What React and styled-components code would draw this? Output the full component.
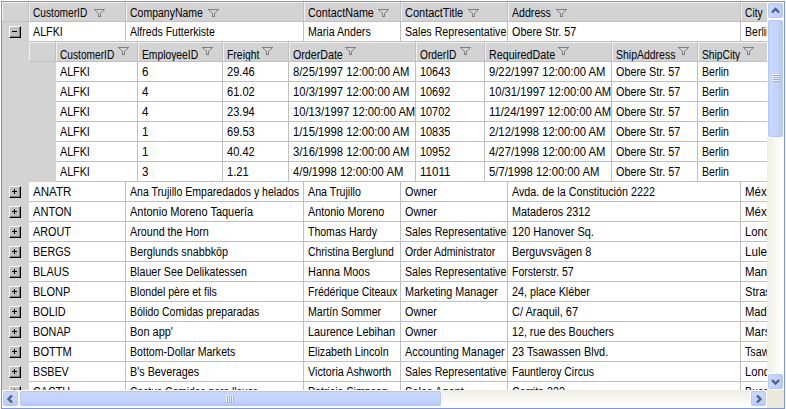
import React, { useLayoutEffect, useRef } from "react";
import styled, { createGlobalStyle } from "styled-components";

const Global = createGlobalStyle`
  html, body { margin: 0; padding: 0; background: #fff; overflow: hidden; }
  * { box-sizing: border-box; }
`;

const LINE = "#c0c0c0";
const FACE = "#d3d3d3";

const Frame = styled.div`
  width: 784px;
  height: 408px;
  margin: 1px 0 0 1px;
  border: 1px solid #7a96df;
  display: grid;
  grid-template-columns: 765px 17px;
  grid-template-rows: 388px 18px;
  font: 12.5px/21px "Liberation Sans", Arial, sans-serif;
  color: #000;
  overflow: hidden;
  background: #fff;
`;

const Viewport = styled.div`
  overflow: hidden;
  background: #fff;
`;

const OuterRow = styled.div`
  display: grid;
  grid-template-columns: 27px 97px 178px 97px 107px 233px 120px;
  height: 20px;
`;

const NestedRow = styled.div`
  display: grid;
  grid-template-columns: 82px 85px 66px 127px 69px 127px 86px 100px;
  height: 20px;
`;

const Gutter = styled.div`
  background: ${FACE};
  display: flex;
  justify-content: flex-end;
  padding: 4px 8px 0 0;
`;

const Cell = styled.div`
  height: 20px;
  border-right: 1px solid ${LINE};
  border-bottom: 1px solid ${LINE};
  padding-left: 4px;
  overflow: hidden;
  white-space: nowrap;
  min-width: 0;
`;

const HeadCell = styled(Cell)`
  display: flex;
  align-items: flex-start;
  background: ${FACE};
  box-shadow: inset 1px 1px 0 #f1f1f1;
  line-height: ${(p) => (p.$nested ? 27 : 23)}px;
`;

const HeadGutter = styled(HeadCell)`
  padding: 0;
`;

const TextBox = styled.span`
  display: block;
  flex: none;
  width: ${(p) => p.$w}px;
  white-space: pre;
`;

const Glyphs = styled.span`
  display: inline-block;
  transform-origin: 0 50%;
`;

const FunnelSvg = styled.svg`
  display: block;
  flex: none;
  margin-top: ${(p) => (p.$nested ? 5 : 7)}px;
  margin-left: ${(p) => p.$gap}px;
`;

const Detail = styled.div`
  display: grid;
  grid-template-columns: 27px 27px 1fr;
  height: 140px;
  overflow: hidden;
`;

const DetailGutter = styled.div`
  background: ${FACE};
`;

const DetailCorner = styled.div`
  height: 20px;
  border-bottom: 1px solid ${LINE};
  border-right: 1px solid ${LINE};
  box-shadow: inset 1px 1px 0 #f1f1f1;
`;

const Toggle = styled.div`
  width: 12px;
  height: 12px;
  background: ${LINE};
  border: 1px solid #000;
  border-top-color: #fff;
  border-left-color: #fff;
  box-shadow: inset -1px -1px 0 #808080;
  svg { display: block; }
`;

const ScrollV = styled.div`
  display: flex;
  flex-direction: column;
  background: linear-gradient(90deg, #eeede5, #fefefb 80%);
`;

const ScrollH = styled.div`
  display: flex;
  align-items: stretch;
  background: linear-gradient(180deg, #eeede5, #fefefb 80%);
  padding-bottom: 1px;
`;

const Part = styled.div`
  flex: none;
  display: flex;
  align-items: center;
  justify-content: center;
  width: ${(p) => p.$w}px;
  height: ${(p) => p.$h}px;
  border: 1px solid #fff;
  border-radius: 3px;
  background: linear-gradient(${(p) => (p.$across ? "90deg" : "180deg")}, #c9d8fc, #c3d3fd 60%, #b4c8f6);
  box-shadow: inset 0 0 0 1px #b4c8f3;
`;

const Spacer = styled.div`
  flex: 1;
`;

const Corner = styled.div`
  background: #ece9d8;
`;

/* Scales a run horizontally so that it takes the given advance width. */
function Text({ children, w }) {
  const ref = useRef(null);
  useLayoutEffect(() => {
    const el = ref.current;
    el.style.transform = `scaleX(${w / el.offsetWidth})`;
  }, [children, w]);
  return (
    <TextBox $w={w}>
      <Glyphs ref={ref}>{children}</Glyphs>
    </TextBox>
  );
}

const Funnel = ({ nested, gap }) => (
  <FunnelSvg $nested={nested} $gap={gap} width="11" height="8" viewBox="0 0 11 8" fill="none" stroke="#808080" shapeRendering="crispEdges">
    <path d="M0 .5H11M1 1.5H2M9 1.5H10M2 2.5H3M8 2.5H9M3 3.5H4M7 3.5H8M4 4.5H5M6 4.5H7M4 5.5H5M6 5.5H7M4 6.5H5M6 6.5H7M4 7.5H7" />
  </FunnelSvg>
);

const Expander = ({ open }) => (
  <Toggle>
    <svg width="10" height="10" viewBox="0 0 10 10" stroke="#000" shapeRendering="crispEdges">
      <path d={open ? "M2 4.5H7" : "M2 4.5H7M4.5 2V7"} />
    </svg>
  </Toggle>
);

const ARROWS = {
  up: "M4 8.5 7.5 5 11 8.5",
  down: "M4 5 7.5 8.5 11 5",
  left: "M9 3.5 5.5 7 9 10.5",
  right: "M6 3.5 9.5 7 6 10.5",
};

const Arrow = ({ dir }) => (
  <svg width="15" height="14" viewBox="0 0 15 14" fill="none" stroke="#4d6185" strokeWidth="2.4">
    <path d={ARROWS[dir]} />
  </svg>
);

const Grip = ({ vertical }) => (
  <svg width="9" height="9" viewBox="0 0 9 9" shapeRendering="crispEdges">
    <path stroke="#eef4fe" d={vertical ? "M1 .5H8M1 2.5H8M1 4.5H8M1 6.5H8" : "M.5 1V8M2.5 1V8M4.5 1V8M6.5 1V8"} />
    <path stroke="#8cb0f8" d={vertical ? "M2 1.5H9M2 3.5H9M2 5.5H9M2 7.5H9" : "M1.5 2V9M3.5 2V9M5.5 2V9M7.5 2V9"} />
  </svg>
);

/* label, label width, gap before the filter icon */
const HEADERS = [["CustomerID", 54.5, 6.5], ["CompanyName", 73, 5], ["ContactName", 65.5, 4.5], ["ContactTitle", 58, 5], ["Address", 39, 5]];
const SUB_HEADERS = [
  ["CustomerID", 54.5, 3.5],
  ["EmployeeID", 56, 4],
  ["Freight", 32.5, 2.5],
  ["OrderDate", 49.5, 2.5],
  ["OrderID", 36, 4],
  ["RequiredDate", 66, 3],
  ["ShipAddress", 59.5, 2.5],
  ["ShipCity", 38.5, 2.5],
];

const REP = ["Sales Representative", 101.5];
const OWNER = ["Owner", 32];
const ROWS = [
  [["ALFKI", 30], ["Alfreds Futterkiste", 85], ["Maria Anders", 63], REP, ["Obere Str. 57", 64], ["Berlin", 27]],
  [["ANATR", 38], ["Ana Trujillo Emparedados y helados", 169], ["Ana Trujillo", 53], OWNER, ["Avda. de la Constitución 2222", 143], ["México D.F.", 60]],
  [["ANTON", 39], ["Antonio Moreno Taquería", 123], ["Antonio Moreno", 76], OWNER, ["Mataderos 2312", 78], ["México D.F.", 60]],
  [["AROUT", 38], ["Around the Horn", 79], ["Thomas Hardy", 69], REP, ["120 Hanover Sq.", 82], ["London", 38]],
  [["BERGS", 38], ["Berglunds snabbköp", 98], ["Christina Berglund", 86], ["Order Administrator", 90], ["Berguvsvägen 8", 79], ["Luleå", 29]],
  [["BLAUS", 36], ["Blauer See Delikatessen", 117], ["Hanna Moos", 62], REP, ["Forsterstr. 57", 62], ["Mannheim", 53]],
  [["BLONP", 37], ["Blondel père et fils", 87], ["Frédérique Citeaux", 89], ["Marketing Manager", 93], ["24, place Kléber", 77.5], ["Strasbourg", 54]],
  [["BOLID", 33], ["Bólido Comidas preparadas", 129], ["Martín Sommer", 73], OWNER, ["C/ Araquil, 67", 66], ["Madrid", 34]],
  [["BONAP", 38], ["Bon app'", 43], ["Laurence Lebihan", 87], OWNER, ["12, rue des Bouchers", 102], ["Marseille", 46]],
  [["BOTTM", 39], ["Bottom-Dollar Markets", 105], ["Elizabeth Lincoln", 81], ["Accounting Manager", 100], ["23 Tsawassen Blvd.", 96], ["Tsawassen", 53]],
  [["BSBEV", 36], ["B's Beverages", 69], ["Victoria Ashworth", 83], REP, ["Fauntleroy Circus", 82], ["London", 38]],
  [["CACTU", 37], ["Cactus Comidas para llevar", 127], ["Patricio Simpson", 80], ["Sales Agent", 59], ["Cerrito 333", 53], ["Buenos Aires", 62]],
];

const ORDERS = [
  ["6", "29.46", ["8/25/1997 12:00:00 AM", 116], "10643", ["9/22/1997 12:00:00 AM", 116]],
  ["4", "61.02", ["10/3/1997 12:00:00 AM", 116], "10692", ["10/31/1997 12:00:00 AM", 122]],
  ["4", "23.94", ["10/13/1997 12:00:00 AM", 122], "10702", ["11/24/1997 12:00:00 AM", 122]],
  ["1", "69.53", ["1/15/1998 12:00:00 AM", 116], "10835", ["2/12/1998 12:00:00 AM", 116]],
  ["1", "40.42", ["3/16/1998 12:00:00 AM", 116], "10952", ["4/27/1998 12:00:00 AM", 116]],
  ["3", "1.21", ["4/9/1998 12:00:00 AM", 110], "11011", ["5/7/1998 12:00:00 AM", 110]],
];

const orderCells = ([emp, freight, date, id, req]) => [
  ["ALFKI", 30],
  [emp, 6.5],
  [freight, freight.length * 6 - 2.5],
  date,
  [id, 30.5],
  req,
  ["Obere Str. 57", 64],
  ["Berlin", 27],
];

const Row = ({ cells, open }) => (
  <OuterRow>
    <Gutter><Expander open={open} /></Gutter>
    {cells.map(([t, w], i) => <Cell key={i}><Text w={w}>{t}</Text></Cell>)}
  </OuterRow>
);

export default function App() {
  return (
    <>
      <Global />
      <Frame>
        <Viewport>
          <OuterRow>
            <HeadGutter />
            {HEADERS.map(([t, w, gap]) => (
              <HeadCell key={t}><Text w={w}>{t}</Text><Funnel gap={gap} /></HeadCell>
            ))}
            <HeadCell><Text w={18}>City</Text></HeadCell>
          </OuterRow>
          <Row cells={ROWS[0]} open />
          <Detail>
            <DetailGutter />
            <DetailGutter><DetailCorner /></DetailGutter>
            <div>
              <NestedRow>
                {SUB_HEADERS.map(([t, w, gap]) => (
                  <HeadCell key={t} $nested><Text w={w}>{t}</Text><Funnel nested gap={gap} /></HeadCell>
                ))}
              </NestedRow>
              {ORDERS.map((o) => (
                <NestedRow key={o[3]}>
                  {orderCells(o).map(([t, w], i) => <Cell key={i}><Text w={w}>{t}</Text></Cell>)}
                </NestedRow>
              ))}
            </div>
          </Detail>
          {ROWS.slice(1).map((r) => <Row key={r[0][0]} cells={r} />)}
        </Viewport>
        <ScrollV>
          <Part $across $w={17} $h={17}><Arrow dir="up" /></Part>
          <Part $across $w={17} $h={119}><Grip vertical /></Part>
          <Spacer />
          <Part $across $w={17} $h={17}><Arrow dir="down" /></Part>
        </ScrollV>
        <ScrollH>
          <Part $w={17} $h={17}><Arrow dir="left" /></Part>
          <Part $w={423} $h={17}><Grip /></Part>
          <Spacer />
          <Part $w={17} $h={17}><Arrow dir="right" /></Part>
        </ScrollH>
        <Corner />
      </Frame>
    </>
  );
}
